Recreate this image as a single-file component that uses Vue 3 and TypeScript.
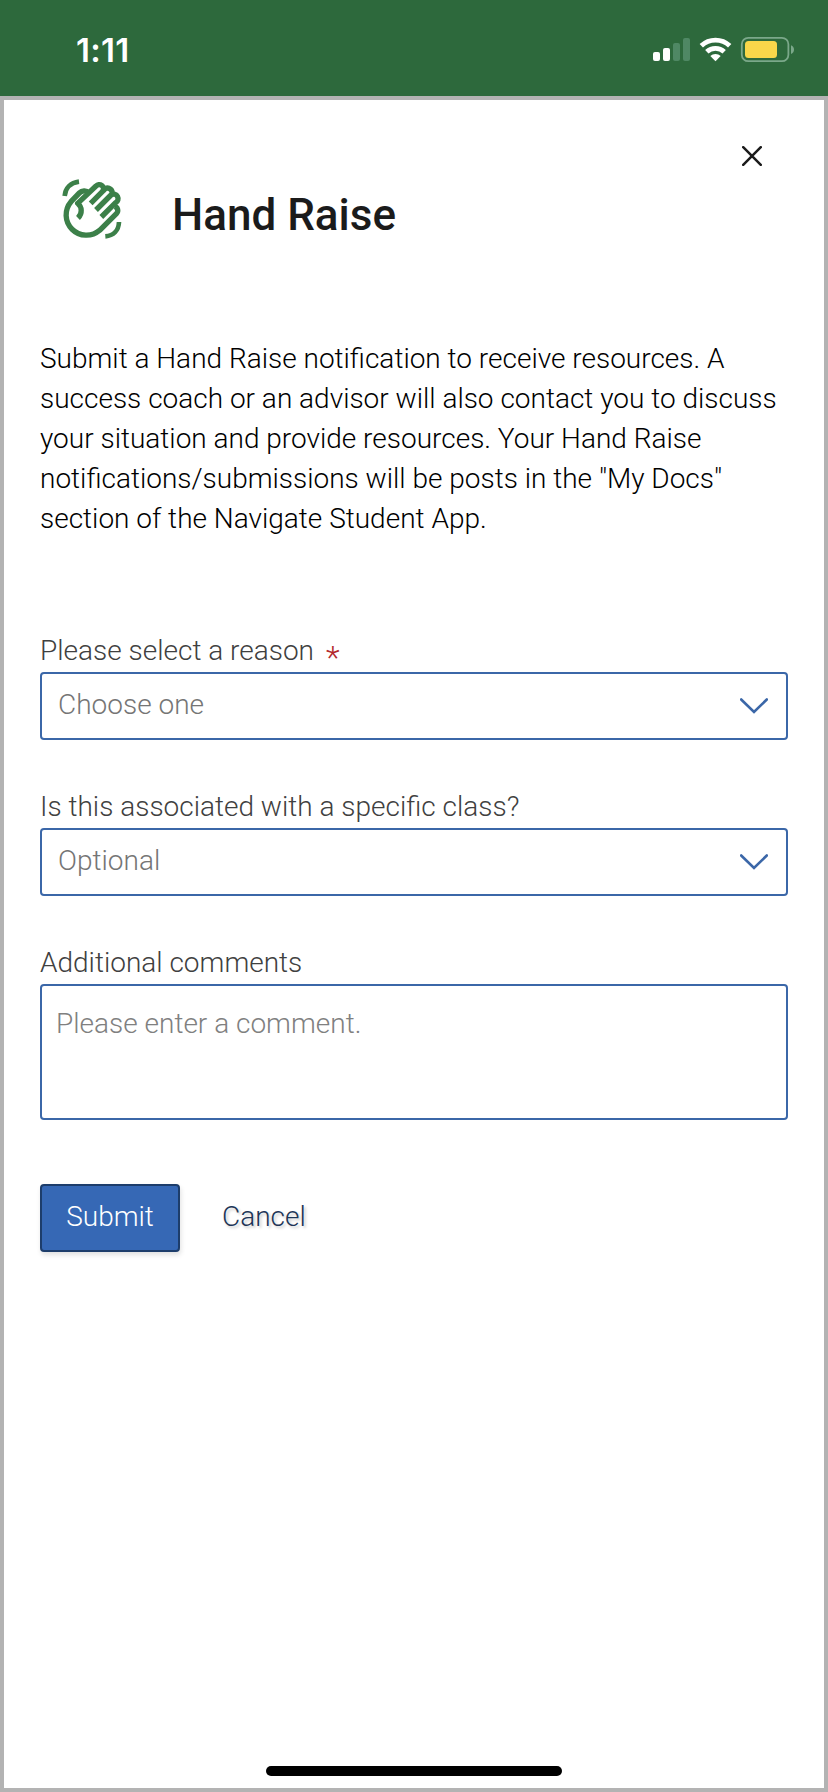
<script setup lang="ts">
import { ref } from 'vue'

interface SelectField {
  id: string
  label: string
  placeholder: string
  required: boolean
}

const selects: SelectField[] = [
  { id: 'reason', label: 'Please select a reason', placeholder: 'Choose one', required: true },
  { id: 'class', label: 'Is this associated with a specific class?', placeholder: 'Optional', required: false },
]

const comment = ref('')
</script>

<template>
  <div class="screen">
    <header class="status">
      <span class="time">1:11</span>
      <svg class="indicators" width="144" height="28" viewBox="652 36 144 28">
        <g fill="#fff">
          <rect x="653" y="52" width="7" height="9" rx="2" />
          <rect x="663" y="48" width="7" height="13" rx="2" />
          <rect x="673" y="43" width="7" height="18" rx="2" fill="#4f8864" />
          <rect x="683" y="38" width="7" height="23" rx="2" fill="#4f8864" />
        </g>
        <g fill="none" stroke="#fff" stroke-width="4.8">
          <path d="M701.3 45.8a20.4 20.4 0 0 1 28.4 0" />
          <path d="M706.8 51.8a12.6 12.6 0 0 1 17.4 0" />
        </g>
        <path d="M715.5 61.3l-5.2-5.2a7.6 7.6 0 0 1 10.4 0z" fill="#fff" />
        <rect x="741.8" y="37.8" width="46.6" height="23.4" rx="6.5" fill="none" stroke="#7ba88a" stroke-width="1.8" />
        <rect x="745" y="41" width="32" height="17" rx="3.5" fill="#f8d74a" />
        <path d="M791 45.2c4 1.6 4 7.2 0 8.8z" fill="#7ba88a" />
      </svg>
    </header>

    <main class="dialog">
      <button class="close" type="button" aria-label="Close">
        <svg width="20" height="20" viewBox="0 0 20 20">
          <path d="M1.2 1.2l17.6 17.6M18.8 1.2L1.2 18.8" fill="none" stroke="#1b1b1b" stroke-width="2.5" stroke-linecap="round" />
        </svg>
      </button>

      <div class="heading">
        <svg class="hand" width="60" height="60" viewBox="66 57 180 180">
          <g fill="none" stroke="#3c8049" stroke-width="16" stroke-linejoin="round">
            <path d="M74 108C76 84 92 68 117 65" stroke-width="14" />
            <path d="M237 186C236 212 220 227 196 229" stroke-width="14" />
            <path d="M114 174C128 160 126 141 113 130L168 78A13 13 0 0 1 189 93" />
            <path d="M145 98C139 90 126 91 118 99L93 125A61 61 0 0 0 179 211L230 160A13 13 0 0 0 224 139" />
            <path d="M152 130L196 86A14 14 0 0 1 216 102L168 150" />
            <path d="M214 104A13.5 13.5 0 0 1 227 128L184 171" />
          </g>
        </svg>
        <h1>Hand Raise</h1>
      </div>

      <p class="intro">
        Submit a Hand Raise notification to receive resources. A success coach or an advisor will also
        contact you to discuss your situation and provide resources. Your Hand Raise
        notifications/submissions will be posts in the "My Docs" section of the Navigate Student App.
      </p>

      <form class="form" @submit.prevent>
        <div v-for="field in selects" :key="field.id" class="field">
          <div class="label">
            <span>{{ field.label }}</span>
            <span v-if="field.required" class="required">*</span>
          </div>
          <div class="select" role="combobox" :aria-label="field.label">
            <span>{{ field.placeholder }}</span>
            <svg width="28" height="16" viewBox="0 0 28 16">
              <path d="M1.2 1.5L14 14L26.8 1.5" fill="none" stroke="#3b67a8" stroke-width="2.6" stroke-linecap="round" />
            </svg>
          </div>
        </div>
        <div class="field">
          <label class="label" for="comment">Additional comments</label>
          <textarea id="comment" v-model="comment" placeholder="Please enter a comment."></textarea>
        </div>
        <div class="actions">
          <button class="submit" type="submit">Submit</button>
          <button class="cancel" type="button">Cancel</button>
        </div>
      </form>

      <div class="home-bar"></div>
    </main>
  </div>
</template>

<style>
body {
  margin: 0;
  background: #fff;
}
</style>

<style scoped>
.screen {
  display: flex;
  flex-direction: column;
  width: 828px;
  height: 1792px;
  overflow: hidden;
  font: 300 28px/40px Roboto, sans-serif;
  color: #000;
}

.status {
  display: flex;
  justify-content: space-between;
  align-items: flex-start;
  box-sizing: border-box;
  height: 96px;
  padding: 0 32px 0 76px;
  background: #2d693c;
}

.time {
  margin-top: 30px;
  font: 600 33px/40px Inter, sans-serif;
  letter-spacing: 0.3px;
  color: #fff;
}

.indicators {
  margin-top: 36px;
}

.dialog {
  display: flex;
  flex-direction: column;
  box-sizing: border-box;
  flex: 1;
  padding: 46px 36px 12px;
  border: 4px solid #b3b3b3;
  background: #fff;
}

button {
  margin: 0;
  padding: 0;
  border: 0;
  background: none;
  font: inherit;
}

.close {
  align-self: flex-end;
  display: flex;
  margin-right: 26px;
}

.heading {
  display: flex;
  align-items: flex-start;
  height: 90px;
  margin-top: 13px;
  padding-left: 22px;
}

h1 {
  margin: 10px 0 0 50px;
  font-size: 44px;
  line-height: 52px;
  font-weight: 500;
  color: #1b1b1b;
}

.intro {
  margin: 70px 0 0;
}

.form {
  margin-top: 91px;
}

.field {
  margin-bottom: 46px;
}

.label {
  display: flex;
  box-sizing: border-box;
  height: 42px;
  padding-top: 1px;
  color: #404040;
}

.required {
  margin: 6px 0 0 12px;
  font-size: 32px;
  color: #b3282d;
}

.select {
  display: flex;
  justify-content: space-between;
  box-sizing: border-box;
  height: 68px;
  padding: 11px 18px 0 16px;
  border: 2px solid #3b67a8;
  border-radius: 4px;
  color: #757575;
}

.select svg {
  margin-top: 13px;
}

textarea {
  display: block;
  box-sizing: border-box;
  width: 100%;
  height: 136px;
  padding: 18px 14px;
  border: 2px solid #3b67a8;
  border-radius: 4px;
  font: inherit;
  resize: none;
  outline: none;
}

textarea::placeholder {
  color: #808080;
}

.actions {
  display: flex;
  margin-top: 64px;
}

.submit {
  box-sizing: border-box;
  width: 140px;
  height: 68px;
  padding-bottom: 2px;
  border: 2px solid #1d3d6b;
  border-radius: 4px;
  background: #3668b5;
  box-shadow: 1px 3px 5px rgba(0, 0, 0, 0.12);
  color: #fff;
}

.cancel {
  height: 66px;
  margin-left: 42px;
  color: #1d3557;
  text-shadow: 2px 2px 3px rgba(0, 0, 0, 0.22);
}

.home-bar {
  align-self: center;
  width: 296px;
  height: 10px;
  margin-top: auto;
  border-radius: 5px;
  background: #000;
}
</style>
